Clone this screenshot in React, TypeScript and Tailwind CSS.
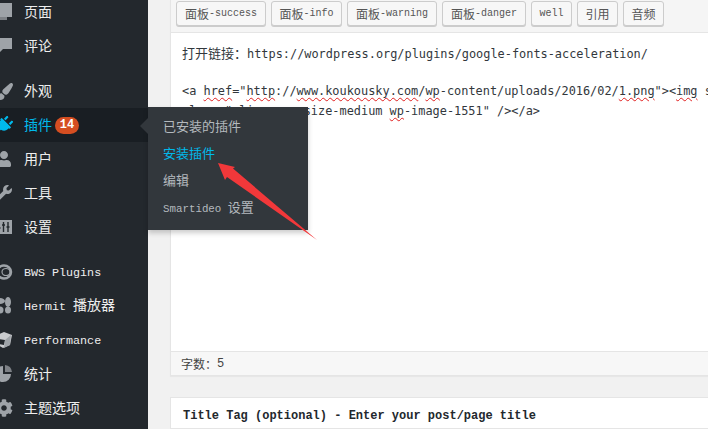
import { ReactNode } from 'react';
import { FaPaintBrush, FaPlug, FaUser, FaWrench, FaCog } from 'react-icons/fa';

const cjk = "font-['Noto_Sans_CJK_SC','Noto_Sans',sans-serif]";
const mono = "font-['Liberation_Mono','Noto_Sans_CJK_SC',monospace]";
const code = "font-['DejaVu_Sans_Mono','Noto_Sans_CJK_SC',monospace]";

const PagesIcon = () => (
  <svg viewBox="0 0 20 20" className="h-5 w-5" fill="currentColor">
    <rect x="1" y="6" width="12" height="12" fill="#7d8186" />
    <rect x="6" y="1" width="12" height="14" />
  </svg>
);

const BubbleIcon = () => (
  <svg viewBox="0 0 20 20" className="h-5 w-5" fill="currentColor">
    <path d="M1 2h17v11h-9l-5 5v-5H1z" />
  </svg>
);

const SlidersIcon = () => (
  <svg viewBox="0 0 20 20" className="h-5 w-5">
    <rect x="1" y="3" width="17" height="14" fill="#9ea3a8" />
    <path d="M5 5v10M9.5 5v10M14 5v10" stroke="#23282d" strokeWidth="1.4" />
    <path d="M3.5 11h3M8 8h3M12.5 10h3" stroke="#23282d" strokeWidth="1.6" />
  </svg>
);

const RingIcon = () => (
  <svg viewBox="0 0 20 20" className="h-5 w-5" fill="none" stroke="currentColor">
    <ellipse cx="10" cy="10" rx="7" ry="6.5" strokeWidth="2.5" />
    <ellipse cx="12" cy="10" rx="4" ry="3.5" strokeWidth="1.2" />
  </svg>
);

const BeeIcon = () => (
  <svg viewBox="0 0 20 20" className="h-5 w-5" fill="currentColor">
    <ellipse cx="6" cy="5" rx="5" ry="3" />
    <ellipse cx="14" cy="6" rx="3" ry="5" />
    <circle cx="6" cy="14" r="3.5" />
    <ellipse cx="14" cy="14" rx="3" ry="3.5" />
  </svg>
);

const CubeIcon = () => (
  <svg viewBox="0 0 20 20" className="h-5 w-5">
    <path d="M1 6l9-4 8 3-2 10-7 3-7-4z" fill="#c9cbce" />
    <path d="M5 9l6 1-1 5-5-1z" fill="#23282d" />
    <path d="M11 10l6-5-1 10-6 3z" fill="#9ea3a8" />
  </svg>
);

const PieIcon = () => (
  <svg viewBox="0 0 20 20" className="h-5 w-5" fill="currentColor">
    <path d="M9 2v8h8a8 8 0 1 1-8-8z" />
    <path d="M11 1a8 8 0 0 1 7 7h-7z" fill="#7d8186" />
  </svg>
);

const MenuRow = ({ icon, children, className = '' }: { icon: ReactNode; children: ReactNode; className?: string }) => (
  <div className={`flex h-[34px] items-center text-[#eeeeee] ${className}`}>
    <span className="-ml-[6px] flex w-5 shrink-0 items-center justify-center text-[#9ea3a8]">{icon}</span>
    <span className="ml-[10px] block pb-[2px]">{children}</span>
  </div>
);

const Latin = ({ children }: { children: ReactNode }) => <span className={`${mono} text-[11.7px]`}>{children}</span>;

const Sidebar = () => (
  <aside className={`${cjk} w-[148px] shrink-0 overflow-hidden bg-[#23282d] text-[14px]`}>
    <div className="-mt-[5px]">
      <MenuRow icon={<PagesIcon />}>页面</MenuRow>
      <MenuRow icon={<BubbleIcon />}>评论</MenuRow>
      <MenuRow icon={<FaPaintBrush size={17} />} className="mt-[11px]">外观</MenuRow>
      <div className="flex h-[34px] items-center bg-[#191e23] text-[#00b9eb]">
        <span className="-ml-[6px] flex w-5 shrink-0 items-center justify-center">
          <FaPlug size={18} className="rotate-45" />
        </span>
        <span className="ml-[10px] pb-[2px]">插件</span>
        <span className={`${mono} ml-[3px] flex h-[17px] w-6 items-center justify-center rounded-full bg-[#d54e21] text-[12px] font-bold text-white`}>
          14
        </span>
      </div>
      <MenuRow icon={<FaUser size={16} />}>用户</MenuRow>
      <MenuRow icon={<FaWrench size={16} />}>工具</MenuRow>
      <MenuRow icon={<SlidersIcon />}>设置</MenuRow>
      <MenuRow icon={<RingIcon />} className="mt-[11px]"><Latin>BWS Plugins</Latin></MenuRow>
      <MenuRow icon={<BeeIcon />}><Latin>Hermit </Latin>播放器</MenuRow>
      <MenuRow icon={<CubeIcon />}><Latin>Performance</Latin></MenuRow>
      <MenuRow icon={<PieIcon />}>统计</MenuRow>
      <MenuRow icon={<FaCog size={18} />}>主题选项</MenuRow>
    </div>
  </aside>
);

const toolbarButtons = [
  { cn: '面板', en: '-success', w: 'w-[90px]' },
  { cn: '面板', en: '-info', w: 'w-[71px]' },
  { cn: '面板', en: '-warning', w: 'w-[90px]' },
  { cn: '面板', en: '-danger', w: 'w-[84px]' },
  { cn: '', en: 'well', w: 'w-[41px]' },
  { cn: '引用', en: '', w: 'w-[41px]' },
  { cn: '音频', en: '', w: 'w-[41px]' },
];

const Toolbar = () => (
  <div className="flex h-[33px] shrink-0 gap-[5px] border-b border-[#e5e5e5] bg-[#f5f5f5] pl-[5px] pt-px">
    {toolbarButtons.map((b) => (
      <div
        key={b.cn + b.en}
        className={`${b.w} flex h-[25px] items-center justify-center rounded-[3px] border border-[#cccccc] bg-[#f7f7f7] text-[#555555] shadow-[0_1px_0_#cccccc]`}
      >
        {b.cn && <span className={`${cjk} text-[12px]`}>{b.cn}</span>}
        {b.en && <span className={`${mono} text-[10px]`}>{b.en}</span>}
      </div>
    ))}
  </div>
);

const Sp = ({ children }: { children: ReactNode }) => (
  <span className="underline decoration-[#e02020] decoration-wavy decoration-1 underline-offset-2">{children}</span>
);

const Editor = () => (
  <section className="flex h-[376px] shrink-0 flex-col border-x border-b border-[#e5e5e5] bg-white shadow-[0_1px_1px_rgba(0,0,0,0.04)]">
    <Toolbar />
    <div className={`${code} flex-1 overflow-hidden whitespace-nowrap pl-[11px] pt-[10px] text-[11.9px] leading-[20px] text-[#32373c]`}>
      <div>
        <span className={`${cjk} text-[13px]`}>打开链接{'\uFF1A'}</span>https://wordpress.org/plugins/google-fonts-acceleration/
      </div>
      <div className="mt-[17px]">
        {'<a '}<Sp>href</Sp>{'="'}<Sp>http</Sp>{'://'}<Sp>www.koukousky.com</Sp>{'/'}<Sp>wp</Sp>{'-content/uploads/2016/02/'}<Sp>1.png</Sp>{'"><'}<Sp>img</Sp>{' s'}
      </div>
      <div>
        {'class="alignnone size-medium '}<Sp>wp</Sp>{'-image-1551" /></a>'}
      </div>
    </div>
    <div className={`${cjk} flex h-[24px] shrink-0 items-center border-t border-[#e5e5e5] bg-[#f7f7f7] pl-[10px] pt-px text-[12px] text-[#444444]`}>
      字数{'\uFF1A'}<span className={`${mono} text-[12px]`}>5</span>
    </div>
  </section>
);

const Flyout = () => (
  <div className={`${cjk} absolute left-[148px] top-[107px] h-[123px] w-[160px] bg-[#32373c] pl-[15px] pt-[5px] text-[13px] leading-[27px] text-[#b4b9be] shadow-[0_3px_5px_rgba(0,0,0,0.2)]`}>
    <span className="absolute -left-[8px] top-[11px] h-0 w-0 border-y-[8px] border-r-[8px] border-y-transparent border-r-[#32373c]" />
    <div>已安装的插件</div>
    <div className="text-[#00b9eb]">安装插件</div>
    <div>编辑</div>
    <div><span className={`${mono} text-[10.8px]`}>Smartideo </span>设置</div>
  </div>
);

const Arrow = () => (
  <svg className="absolute left-0 top-0" width="708" height="429" viewBox="0 0 708 429">
    <polygon points="218,163 235,167 233,168.5 317,240 227,177 225,180" fill="#f2383a" />
  </svg>
);

export default function App() {
  return (
    <div className="relative flex h-[429px] w-[708px] overflow-hidden bg-[#f1f1f1]">
      <Sidebar />
      <main className="-mr-[2px] flex min-w-0 flex-1 flex-col pl-[22px]">
        <Editor />
        <div className="mt-[21px] flex-1 border border-[#e5e5e5] bg-white pl-[12px] pt-[10px]">
          <div className={`${mono} text-[12px] font-bold leading-[16px] text-[#23282d]`}>
            Title Tag (optional) - Enter your post/page title
          </div>
        </div>
      </main>
      <Flyout />
      <Arrow />
    </div>
  );
}
